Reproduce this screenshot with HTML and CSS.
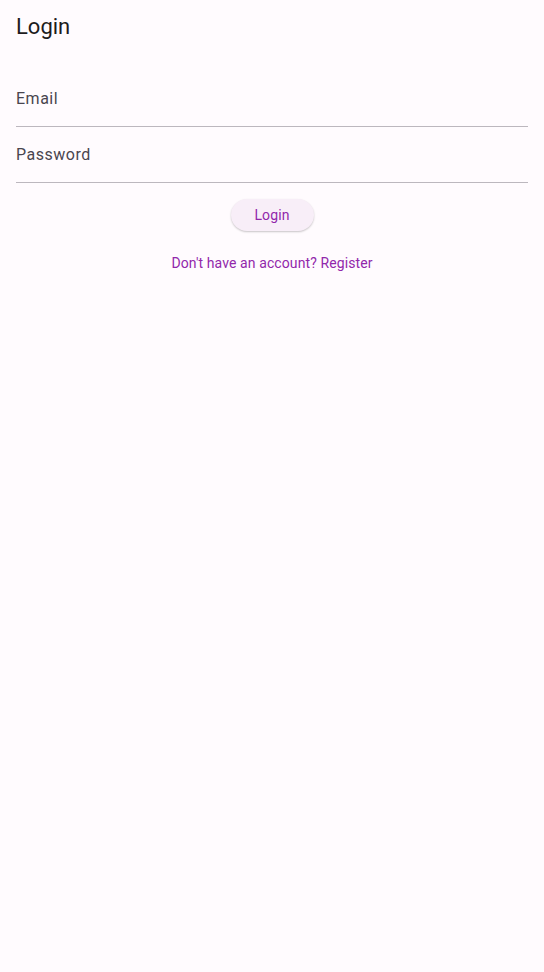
FILE: index.html
```html
<!DOCTYPE html>
<html>
<head>
<meta charset="utf-8">
<link rel="stylesheet" href="styles.css">
</head>
<body>
<header class="appbar"><h1 class="title">Login</h1></header>
<main class="content">
  <label class="field"><span class="label">Email</span></label>
  <label class="field"><span class="label">Password</span></label>
  <div class="actions">
    <button class="btn-login">Login</button>
    <button class="btn-link">Don't have an account? Register</button>
  </div>
</main>
</body>
</html>
```
FILE: styles.css
```css
html, body {
  margin: 0;
  padding: 0;
  background: #fffbfe;
  font-family: Roboto, "Liberation Sans", sans-serif;
  height: 100%;
}
.appbar {
  height: 56px;
  display: flex;
  align-items: center;
  padding: 0 16px;
}
.title {
  margin: 0;
  font-size: 22px;
  font-weight: 400;
  color: #1d1b20;
  line-height: 28px;
  position: relative;
  top: -1px;
}
.content {
  padding: 15px 16px 0;
  display: flex;
  flex-direction: column;
}
.field {
  height: 56px;
  border-bottom: 1px solid #bcb7be;
  box-sizing: border-box;
  display: flex;
  align-items: center;
}
.label {
  font-size: 16px;
  color: #49454f;
  letter-spacing: 0.5px;
}
.actions {
  display: flex;
  flex-direction: column;
  align-items: center;
  padding-top: 16px;
}
.btn-login {
  height: 32px;
  width: 83px;
  border: none;
  border-radius: 16px;
  background: #f8eef8;
  color: #9227ab;
  font-family: inherit;
  font-size: 14px;
  letter-spacing: 0.1px;
  box-shadow: 0 1px 2px rgba(0,0,0,0.22);
  padding: 0;
}
.btn-link {
  margin-top: 16px;
  height: 32px;
  border: none;
  background: transparent;
  color: #9227ab;
  font-family: inherit;
  font-size: 14px;
  letter-spacing: 0.1px;
  padding: 0 12px;
}
```
